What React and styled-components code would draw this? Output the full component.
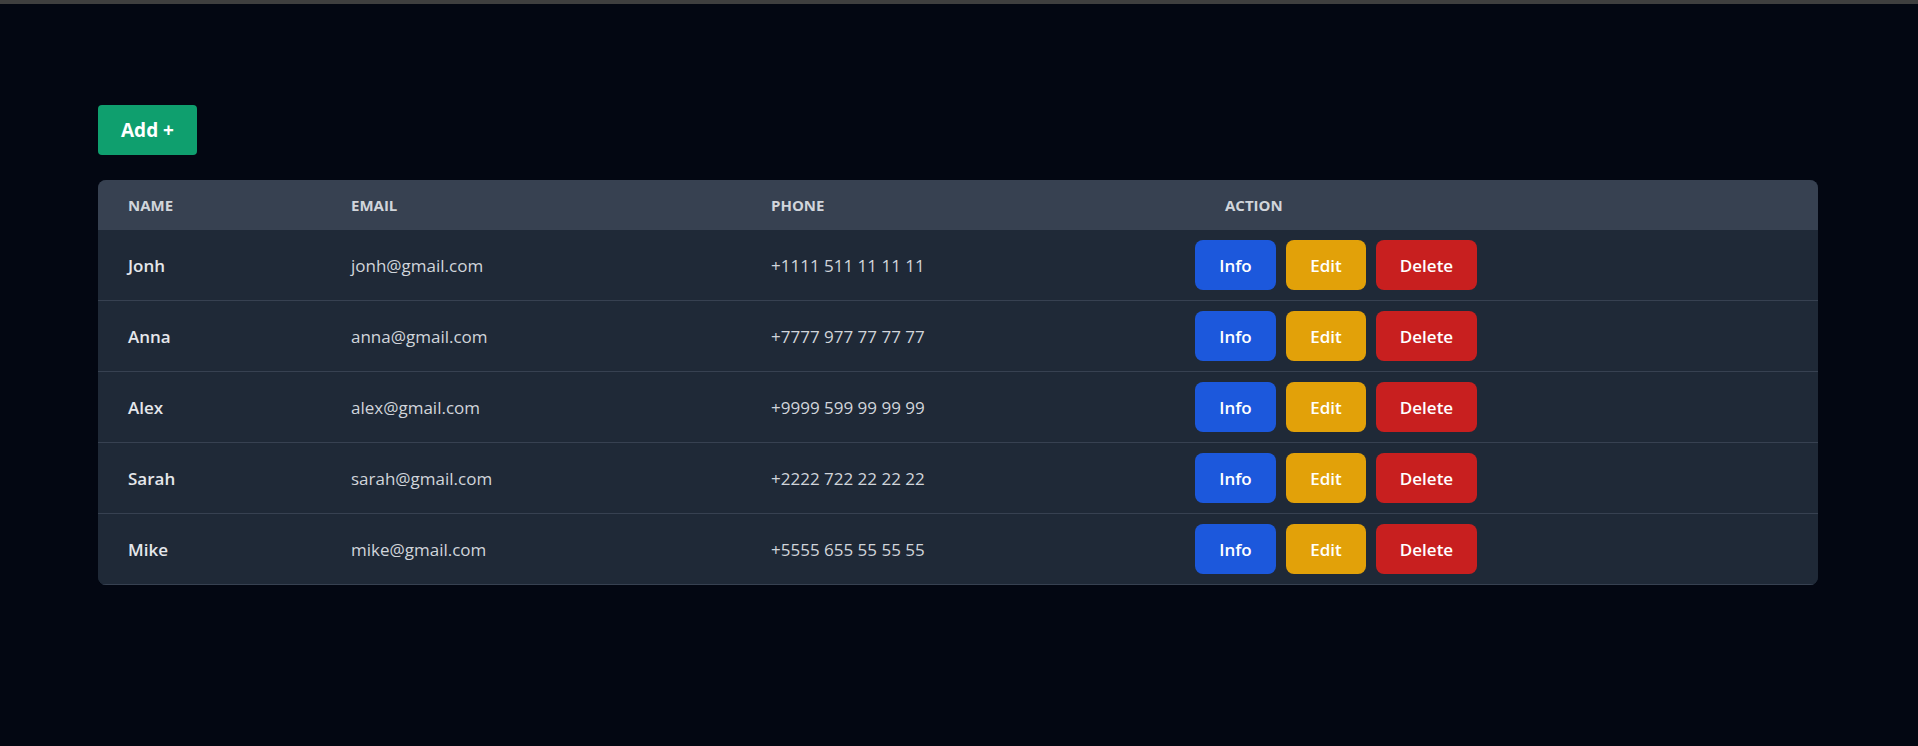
import React from 'react'
import styled, { createGlobalStyle } from 'styled-components'

const GlobalStyle = createGlobalStyle`
  body {
    margin: 0;
    background: #030712;
    font-family: "Open Sans", "Noto Sans", sans-serif;
  }
`

const Page = styled.div`
  min-height: 746px;
  box-sizing: border-box;
  border-top: 4px solid #3f3f3f;
  padding: 101px 100px 0 98px;
`

const AddButton = styled.button`
  display: block;
  width: 99px;
  height: 50px;
  border: none;
  border-radius: 4px;
  background: #0f9f6e;
  color: #fff;
  font-family: inherit;
  font-size: 19px;
  font-weight: 700;
  cursor: pointer;
`

const Table = styled.div`
  margin-top: 25px;
  border-radius: 8px;
  overflow: hidden;
  background: #1f2937;
`

const Row = styled.div`
  display: grid;
  grid-template-columns: 223px 420px 424px 1fr;
  align-items: center;
  height: ${p => (p.$head ? '50px' : '70px')};
  background: ${p => (p.$head ? '#374151' : '#1f2937')};
  border-bottom: ${p => (p.$head ? 'none' : '1px solid #374151')};
`

const HeadCell = styled.div`
  padding-left: ${p => (p.$action ? '60px' : '30px')};
  color: #d1d5db;
  font-size: 15px;
  font-weight: 700;
  text-transform: uppercase;
`

const Cell = styled.div`
  padding-left: 30px;
  color: ${p => (p.$bold ? '#e5e7eb' : '#d1d5db')};
  font-size: 17px;
  font-weight: ${p => (p.$bold ? 600 : 400)};
`

const Actions = styled.div`
  display: flex;
  gap: 10px;
  padding-left: 30px;
`

const ActionButton = styled.button`
  height: 50px;
  padding: 0 20px;
  min-width: ${p => p.$w}px;
  border: none;
  border-radius: 8px;
  background: ${p => p.$bg};
  color: #fff;
  font-family: inherit;
  font-size: 17px;
  font-weight: 600;
  cursor: pointer;
`

const people = [
  { name: 'Jonh', email: 'jonh@gmail.com', phone: '+1111 511 11 11 11' },
  { name: 'Anna', email: 'anna@gmail.com', phone: '+7777 977 77 77 77' },
  { name: 'Alex', email: 'alex@gmail.com', phone: '+9999 599 99 99 99' },
  { name: 'Sarah', email: 'sarah@gmail.com', phone: '+2222 722 22 22 22' },
  { name: 'Mike', email: 'mike@gmail.com', phone: '+5555 655 55 55 55' },
]

function App() {
  return (
    <Page>
      <GlobalStyle />
      <AddButton>Add +</AddButton>
      <Table>
        <Row $head>
          <HeadCell>Name</HeadCell>
          <HeadCell>Email</HeadCell>
          <HeadCell>Phone</HeadCell>
          <HeadCell $action>Action</HeadCell>
        </Row>
        {people.map(p => (
          <Row key={p.name}>
            <Cell $bold>{p.name}</Cell>
            <Cell>{p.email}</Cell>
            <Cell>{p.phone}</Cell>
            <Actions>
              <ActionButton $bg="#1c58dc" $w={81}>Info</ActionButton>
              <ActionButton $bg="#e2a109" $w={80}>Edit</ActionButton>
              <ActionButton $bg="#c81f1f" $w={101}>Delete</ActionButton>
            </Actions>
          </Row>
        ))}
      </Table>
    </Page>
  )
}

export default App
